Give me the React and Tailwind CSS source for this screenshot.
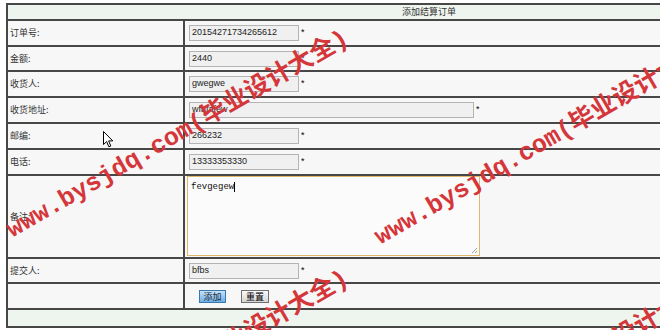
import React from 'react';

const rows = [
  { label: '订单号:', value: '20154271734265612', h: 'h-[26px]' },
  { label: '金额:', value: '2440', h: 'h-[25px]' },
  { label: '收货人:', value: 'gwegwe', h: 'h-[26px]' },
  { label: '收货地址:', value: 'wfafafew', h: 'h-[26px]', wide: true },
  { label: '邮编:', value: '266232', h: 'h-[26px]' },
  { label: '电话:', value: '13333353330', h: 'h-[26px]' },
];

const cjk = { fontFamily: '"Noto Sans CJK SC", "Liberation Sans", sans-serif' };
const latin = { fontFamily: '"Liberation Sans", Arial, sans-serif' };

const Field = ({ value, wide }) => (
  <div className="flex items-center">
    <div
      className={`${wide ? 'w-[285px]' : 'w-[110px]'} h-[16px] border border-[#b4b4b4] bg-[#f0f0f0] pl-[2px] flex items-center text-[9px] text-[#222]`}
      style={latin}
    >
      {value}
    </div>
    <span className="ml-[2px] text-[9px] text-black" style={latin}>*</span>
  </div>
);

const Row = ({ label, h, children }) => (
  <div className={`flex ${h} border-b-2 border-[#474747] bg-[#f7f7f7]`}>
    <div className="w-[177px] shrink-0 border-r-2 border-[#474747] pl-[2px] flex items-center text-[9px] text-[#333]" style={cjk}>
      {label}
    </div>
    <div className="flex-1 flex items-center pl-[4px]">{children}</div>
  </div>
);

const Watermark = ({ x, y }) => (
  <div
    className="absolute whitespace-nowrap text-[25px] leading-[26px] font-bold text-[#d5363a] pointer-events-none"
    style={{ left: x, top: y, transform: 'rotate(-30deg)', transformOrigin: '0 50%' }}
  >
    <span style={{ fontFamily: '"Liberation Mono", monospace' }}>www.bysjdq.com(</span>
    <span style={{ fontFamily: '"Noto Sans CJK SC", sans-serif' }}>毕业设计大全</span>
    <span style={{ fontFamily: '"Liberation Mono", monospace' }}>)</span>
  </div>
);

export default function App() {
  return (
    <div className="relative w-[660px] h-[330px] overflow-hidden bg-white">
      <div className="pt-[3px] pl-[6px]">
        <div className="w-[846px] border-2 border-[#474747]">
          {/* title */}
          <div className="h-[16px] border-b-2 border-[#474747] bg-[#eef5ee] flex items-center justify-center text-[9px] text-[#333]" style={cjk}>
            添加结算订单
          </div>

          {rows.map((r) => (
            <Row key={r.label} label={r.label} h={r.h}>
              <Field value={r.value} wide={r.wide} />
            </Row>
          ))}

          {/* remark */}
          <div className="flex h-[83px] border-b-2 border-[#474747] bg-[#f7f7f7]">
            <div className="w-[177px] shrink-0 border-r-2 border-[#474747] pl-[2px] flex items-center text-[9px] text-[#333]" style={cjk}>
              备注:
            </div>
            <div className="flex-1 pl-[2px]">
              <div className="relative w-[293px] h-[80px] border border-[#dfb86e] bg-[#fbfbfb] px-[3px] pt-[4px] text-[9px] text-[#111]" style={{ fontFamily: '"Liberation Mono", monospace' }}>
                fevgegew<span className="inline-block w-px h-[10px] bg-black align-middle" />
                <svg className="absolute right-[1px] bottom-[1px]" width="7" height="7" viewBox="0 0 7 7">
                  <path d="M6 1 L1 6 M6 4 L4 6" stroke="#a0a0a0" strokeWidth="1" />
                </svg>
              </div>
            </div>
          </div>

          <Row label="提交人:" h="h-[25px]">
            <Field value="bfbs" />
          </Row>

          {/* buttons */}
          <div className="flex h-[26px] border-b-2 border-[#474747] bg-[#f7f7f7]">
            <div className="w-[177px] shrink-0 border-r-2 border-[#474747]" />
            <div className="flex-1 flex items-center pl-[14px] gap-[15px]" style={cjk}>
              <button className="w-[27px] h-[13px] border border-[#3a77ac] bg-gradient-to-b from-[#c5e2fa] to-[#6eaee3] text-[9px] leading-none text-[#1b2a3a] flex items-center justify-center">
                添加
              </button>
              <button className="w-[28px] h-[13px] border border-[#6f6f6f] bg-gradient-to-b from-[#fafafa] to-[#d6d6d6] text-[9px] leading-none text-black flex items-center justify-center">
                重置
              </button>
            </div>
          </div>

          {/* footer */}
          <div className="h-[16px] bg-[#eef5ee]" />
        </div>
      </div>

      {/* mouse pointer */}
      <svg className="absolute left-[103px] top-[131px]" width="11" height="17" viewBox="0 0 11 17">
        <path d="M0.5 0.5 L0.5 13.5 L3.6 10.6 L5.9 15.8 L7.8 15 L5.6 9.9 L9.8 9.9 Z" fill="#fff" stroke="#000" strokeWidth="1" strokeLinejoin="round" />
      </svg>

      {/* watermarks */}
      <Watermark x={8} y={215} />
      <Watermark x={376} y={222} />
      <Watermark x={8} y={455} />
      <Watermark x={376} y={462} />
    </div>
  );
}
